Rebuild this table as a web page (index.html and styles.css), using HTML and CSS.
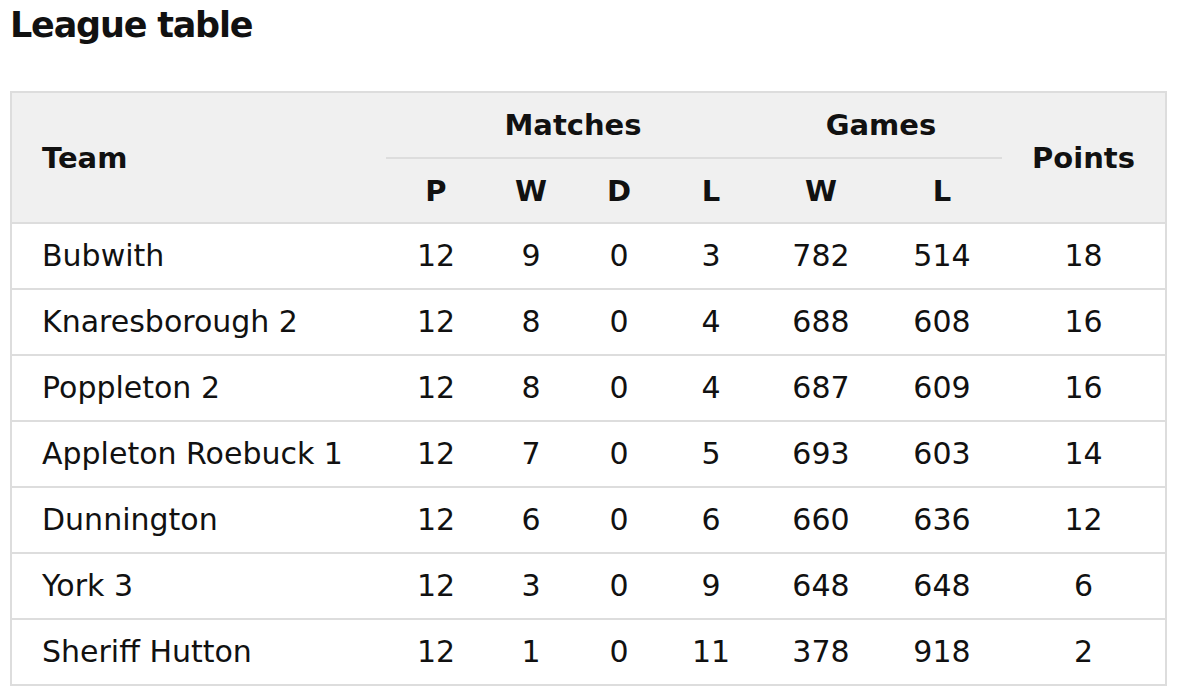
FILE: index.html
```html
<!DOCTYPE html>
<html lang="en">
<head>
<meta charset="utf-8">
<title>League table</title>
<link rel="stylesheet" href="styles.css">
</head>
<body>
<h1 class="title">League table</h1>
<table class="league">
  <colgroup>
    <col class="c-team">
    <col class="c-p">
    <col class="c-w">
    <col class="c-d">
    <col class="c-l">
    <col class="c-gw">
    <col class="c-gl">
    <col class="c-pts">
  </colgroup>
  <thead>
    <tr class="head-top">
      <th rowspan="2" class="team-h">Team</th>
      <th colspan="4" class="group">Matches</th>
      <th colspan="2" class="group">Games</th>
      <th rowspan="2">Points</th>
    </tr>
    <tr class="head-sub">
      <th>P</th><th>W</th><th>D</th><th>L</th><th>W</th><th>L</th>
    </tr>
  </thead>
  <tbody>
    <tr><td class="team">Bubwith</td><td>12</td><td>9</td><td>0</td><td>3</td><td>782</td><td>514</td><td>18</td></tr>
    <tr><td class="team">Knaresborough 2</td><td>12</td><td>8</td><td>0</td><td>4</td><td>688</td><td>608</td><td>16</td></tr>
    <tr><td class="team">Poppleton 2</td><td>12</td><td>8</td><td>0</td><td>4</td><td>687</td><td>609</td><td>16</td></tr>
    <tr><td class="team">Appleton Roebuck 1</td><td>12</td><td>7</td><td>0</td><td>5</td><td>693</td><td>603</td><td>14</td></tr>
    <tr><td class="team">Dunnington</td><td>12</td><td>6</td><td>0</td><td>6</td><td>660</td><td>636</td><td>12</td></tr>
    <tr><td class="team">York 3</td><td>12</td><td>3</td><td>0</td><td>9</td><td>648</td><td>648</td><td>6</td></tr>
    <tr><td class="team">Sheriff Hutton</td><td>12</td><td>1</td><td>0</td><td>11</td><td>378</td><td>918</td><td>2</td></tr>
  </tbody>
</table>
</body>
</html>
```
FILE: styles.css
```css
html, body {
  margin: 0;
  padding: 0;
  background: #ffffff;
}
body {
  padding: 0 10px;
  font-family: "DejaVu Sans", "Open Sans", sans-serif;
  color: #111111;
}
.title {
  margin: 0 0 41px 0;
  font-size: 35px;
  letter-spacing: -1.2px;
  line-height: 50px;
  font-weight: 700;
}
.league {
  width: 1155px;
  table-layout: fixed;
  border-collapse: collapse;
  border: 2px solid #dddddd;
  font-size: 30px;
}
.c-team { width: 375px; }
.c-p { width: 100px; }
.c-w { width: 90px; }
.c-d { width: 86px; }
.c-l { width: 98px; }
.c-gw { width: 122px; }
.c-gl { width: 120px; }
.c-pts { width: 164px; }
.league thead {
  background: #f0f0f0;
}
.league th {
  font-size: 29px;
  font-weight: 700;
  text-align: center;
  padding: 0;
  line-height: 40px;
}
.head-top th {
  height: 64px;
}
.head-top th.group {
  border-bottom: 2px solid #dddddd;
}
.head-sub th {
  height: 63px;
}
.league th.team-h {
  text-align: left;
  padding-left: 30px;
}
.league tbody td {
  height: 64px;
  padding: 0;
  text-align: center;
  line-height: 40px;
  border-top: 2px solid #dddddd;
}
.league tbody td.team {
  text-align: left;
  padding-left: 30px;
}
```
